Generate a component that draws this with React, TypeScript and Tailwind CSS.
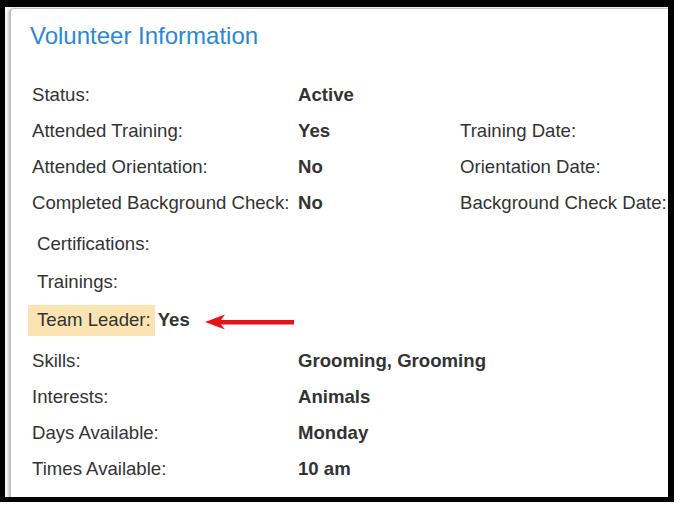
const rowsTop = [
  { label: 'Status:', value: 'Active' },
  { label: 'Attended Training:', value: 'Yes', extra: 'Training Date:' },
  { label: 'Attended Orientation:', value: 'No', extra: 'Orientation Date:' },
  { label: 'Completed Background Check:', value: 'No', extra: 'Background Check Date:' },
]

const rowsBottom = [
  { label: 'Skills:', value: 'Grooming, Grooming' },
  { label: 'Interests:', value: 'Animals' },
  { label: 'Days Available:', value: 'Monday' },
  { label: 'Times Available:', value: '10 am' },
]

function InfoRow({ label, value, extra }: { label: string; value: string; extra?: string }) {
  return (
    <div className="flex h-9 items-center whitespace-nowrap">
      <span className="w-[266px] shrink-0">{label}</span>
      <span className="w-[162px] shrink-0 font-bold">{value}</span>
      {extra && <span>{extra}</span>}
    </div>
  )
}

function Arrow() {
  return (
    <svg width="92" height="18" viewBox="0 0 92 18" className="ml-[14px] mt-[3px]">
      <path d="M1 9 L21 1.5 L17 7 L90 7 L90 11.5 L17 11.5 L21 16.5 Z" fill="#e8121a" />
    </svg>
  )
}

export default function App() {
  return (
    <div className="h-[508px] w-[681px] bg-white font-['Liberation_Sans',Arial,sans-serif]">
      <div className="flex h-[502px] w-[674px] border-b-[5px] border-l-[5px] border-r-[6px] border-t-[7px] border-black bg-[#f4f4f4] pl-[4px] pt-[1px]">
        <div className="flex-1 overflow-hidden rounded-tl-[5px] border-l-[2px] border-t border-[#c4c4c4] bg-white pl-[21px] pt-[12px] text-[18.6px] text-[#333] shadow-[-1px_0_2px_rgba(0,0,0,0.15)]">
          <h2 className="-ml-[2px] h-[30px] text-[24px] leading-[30px] text-[#2b87d3]">Volunteer Information</h2>
          <div className="mt-[26px]">
            {rowsTop.map((r) => (
              <InfoRow key={r.label} {...r} />
            ))}
          </div>
          <div className="-ml-[4px] mt-[5px] flex flex-col gap-[2px]">
            <div className="flex h-9 items-center">
              <span className="px-[9px]">Certifications:</span>
            </div>
            <div className="flex h-9 items-center">
              <span className="px-[9px]">Trainings:</span>
            </div>
            <div className="flex h-9 items-center whitespace-nowrap">
              <span className="flex h-[31px] items-center bg-[#fce4b2] pl-[9px] pr-[4px]">Team Leader:</span>
              <span className="ml-[3px] font-bold">Yes</span>
              <Arrow />
            </div>
          </div>
          <div className="mt-[5px]">
            {rowsBottom.map((r) => (
              <InfoRow key={r.label} {...r} />
            ))}
          </div>
        </div>
      </div>
    </div>
  )
}
